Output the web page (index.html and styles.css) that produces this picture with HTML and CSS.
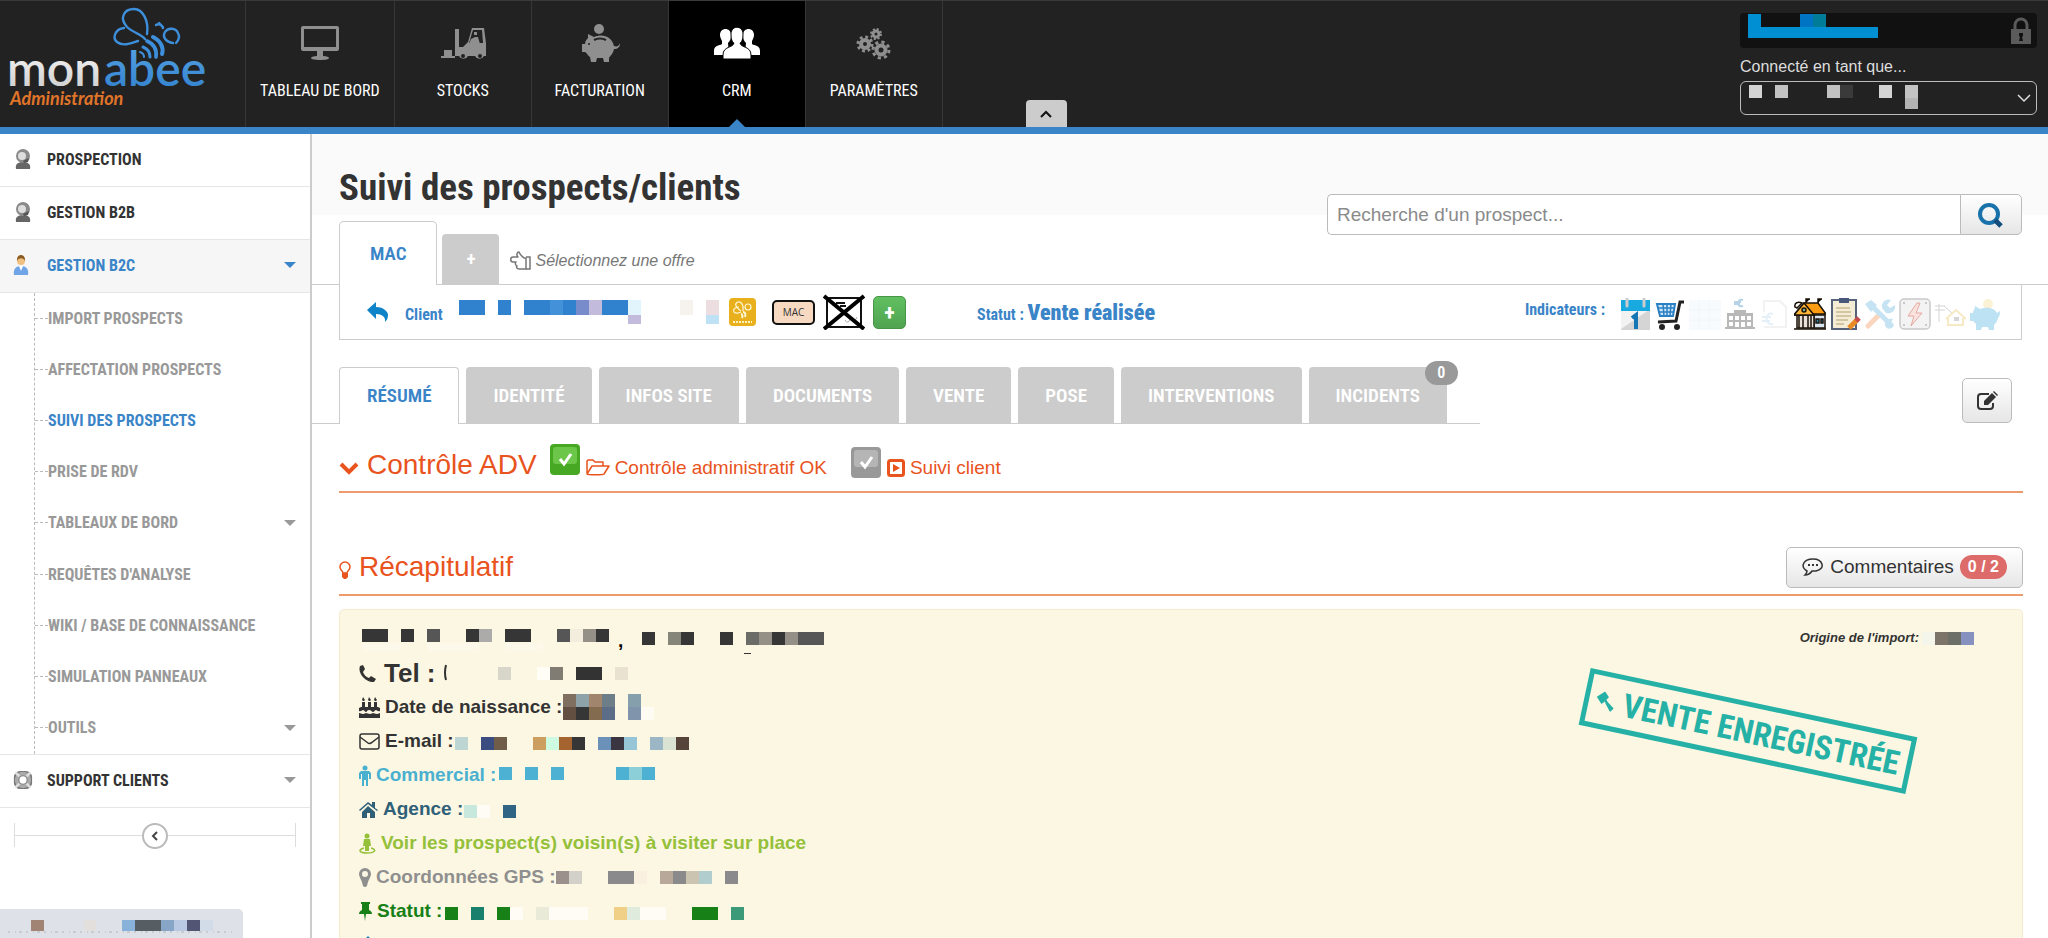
FILE: index.html
```html
<!DOCTYPE html>
<html lang="fr">
<head>
<meta charset="utf-8">
<title>Monabee - Suivi des prospects/clients</title>
<link rel="stylesheet" href="styles.css">
</head>
<body>
<header class="topbar">
  <a class="logo" href="#" aria-label="Monabee Administration">
    <svg width="230" height="110" viewBox="0 0 230 110">
      <defs>
        <linearGradient id="silver" x1="0" y1="0" x2="0" y2="1"><stop offset="0" stop-color="#fff"/><stop offset="1" stop-color="#c9c9c9"/></linearGradient>
        <linearGradient id="azure" x1="0" y1="0" x2="0" y2="1"><stop offset="0" stop-color="#5aa6e6"/><stop offset="1" stop-color="#2f7fcb"/></linearGradient>
      </defs>
      <text x="7" y="85" class="logo-word" fill="url(#silver)">mon</text>
      <text x="104" y="85" class="logo-word" fill="url(#azure)">abee</text>
      <text x="10" y="104" class="logo-sub">Administration</text>
      <g fill="none" stroke="#3d8fdb" stroke-linecap="round">
        <path stroke-width="2.4" d="M147 33C149 20 143 8 134 8C124 8 119 17 127 26C132 31 141 33 145 38"/>
        <path stroke-width="2.4" d="M124 27C115 28 112 37 117 41C123 46 132 42 138 40"/>
        <path stroke-width="2.4" d="M173 42C166 41 162 36 165 31C168 26 176 27 178 32C180 36 178 40 176 42"/>
        <path stroke-width="2.4" d="M156 24C159 22 162 24 163 27M159 22l4 4"/>
        <path stroke-width="4" d="M153 36C161 40 164 47 162 53"/>
        <path stroke-width="3.6" d="M147 40C154 43 157 49 156 56"/>
        <path stroke-width="3" d="M143 46C148 48 150 51 150 56"/>
        <path stroke-width="2" d="M140 51C143 52 144 54 144 56"/>
      </g>
    </svg>
  </a>
  <nav class="modules">
    <a href="#"><svg width="44" height="44" viewBox="0 0 44 44"><path fill="#8f8f8f" fill-rule="evenodd" d="M5 5h34a2 2 0 0 1 2 2v21a2 2 0 0 1-2 2H25v5c4 0 6 1 6 2s-3 2-9 2-9-1-9-2 2-2 6-2v-5H5a2 2 0 0 1-2-2V7a2 2 0 0 1 2-2zm1 3v18h32V8z"/></svg>TABLEAU DE BORD</a>
    <a href="#"><svg width="48" height="44" viewBox="0 0 48 44"><path fill="#8f8f8f" d="M16 8h4v18h4l5-5 4-14h12l2 15v13h-2a5 5 0 0 1-9 0h-7a5 5 0 0 1-9 0h-4zM2 35h14v2H2zM5 29h8v6H5z"/><path fill="#222" d="M34 9h9l1 13H30z"/><path fill="#8f8f8f" d="M35 11h3v3h-3zM32 18l4-2h3l2 7H30z"/><circle cx="24" cy="35" r="2" fill="#222"/><circle cx="41" cy="35" r="2" fill="#222"/></svg>STOCKS</a>
    <a href="#"><svg width="44" height="44" viewBox="0 0 44 44"><circle cx="21" cy="8" r="5" fill="#8f8f8f"/><path fill="#8f8f8f" d="M10 13l6 3c9-4 18 0 20 9 3 1 5 0 6-3 0 4-2 6-6 6-1 5-4 7-5 9v4h-5l-1-4h-6l-1 4h-5l-1-5c-2-1-3-4-5-5H4v-8h3c0-3 2-5 3-6z"/><path d="M16 19q6-3 12 0" stroke="#222" stroke-width="2" fill="none"/><circle cx="11" cy="23" r="1" fill="#222"/></svg>FACTURATION</a>
    <a href="#" class="current"><svg width="50" height="44" viewBox="0 0 50 44"><g fill="#fff"><path d="M8 14c0-8 11-8 11 0 0 4-1 6-3 8l1 12H2v-4c0-6 5-5 8-7v-3c-1-2-2-4-2-6z"/><path d="M42 14c0-8-11-8-11 0 0 4 1 6 3 8l-1 12h15v-4c0-6-5-5-8-7v-3c1-2 2-4 2-6z"/><path stroke="#000" stroke-width="1" d="M19 13c0-9 12-9 12 0 0 5-1 8-3 9 1 5 11 3 11 12v4H11v-4c0-9 10-7 11-12-2-1-3-4-3-9z"/></g></svg>CRM</a>
    <a href="#"><svg width="44" height="44" viewBox="0 0 44 44"><g fill="none" stroke="#8f8f8f"><circle cx="13" cy="23" r="4" stroke-width="4"/><circle cx="13" cy="23" r="7" stroke-width="3" stroke-dasharray="2.8 2.7"/><circle cx="29" cy="29" r="4.500" stroke-width="4"/><circle cx="29" cy="29" r="8" stroke-width="3" stroke-dasharray="3.2 3.100"/><circle cx="24" cy="13" r="3" stroke-width="3"/><circle cx="24" cy="13" r="5" stroke-width="2" stroke-dasharray="2 1.950"/></g></svg>PARAMÈTRES</a>
  </nav>
  <button class="fold" aria-label="Replier"><svg width="12" height="8" viewBox="0 0 12 8"><path d="M1 7l5-5 5 5" fill="none" stroke="#111" stroke-width="2"/></svg></button>
  <div class="session">
    <div class="session-user">
      <svg width="132" height="26" viewBox="0 0 132 26"><path fill="#008fd3" d="M0 0h13v13h117v11H0z"/><path fill="#0074c4" d="M52 0h13v13H52z"/><path fill="#007b98" d="M65 0h13v13H65z"/></svg>
      <svg width="22" height="28" viewBox="0 0 22 28"><path fill="#5b5b5b" d="M1 12h20v15H1z"/><path fill="none" stroke="#5b5b5b" stroke-width="3" d="M5 12V8a6 6 0 0 1 12 0v4"/><path fill="#111" d="M9 16h4v3l-1 1 1 4H9l1-4-1-1z"/></svg>
    </div>
    <label for="as">Connecté en tant que...</label>
    <div class="session-select">
      <select id="as"><option></option></select>
      <svg class="session-value" width="170" height="24" viewBox="0 0 170 24"><path fill="#d4d4d4" d="M0 0h13v13H0zM130 0h13v13h-13z"/><path fill="#c2c2c2" d="M26 0h13v13H26zM78 0h13v13H78zM156 0h13v13h-13z"/><path fill="#3a3a3a" d="M91 0h13v13H91z"/><path fill="#b4b4b4" d="M156 13h13v11h-13z"/></svg>
      <svg class="session-arrow" width="14" height="9" viewBox="0 0 14 9"><path d="M1 1l6 6 6-6" fill="none" stroke="#ddd" stroke-width="1.500"/></svg>
    </div>
  </div>
</header>
<div class="shell">
  <aside class="sidebar">
    <ul class="menu">
      <li><a href="#"><svg width="20" height="20" viewBox="0 0 20 20"><path fill="#666" d="M3 20c-1-5 2-7 7-7s8 2 7 7z"/><circle cx="10" cy="7" r="7" fill="#8a8a8a"/><circle cx="9" cy="7" r="4" fill="#ddd"/><path fill="#555" d="M10 12l6-3-1 4-4 1z"/></svg>PROSPECTION</a></li>
      <li><a href="#"><svg width="20" height="20" viewBox="0 0 20 20"><path fill="#666" d="M3 20c-1-5 2-7 7-7s8 2 7 7z"/><circle cx="10" cy="7" r="7" fill="#8a8a8a"/><circle cx="9" cy="7" r="4" fill="#ddd"/><path fill="#555" d="M10 12l6-3-1 4-4 1z"/></svg>GESTION B2B</a></li>
      <li class="open"><a href="#"><svg width="20" height="20" viewBox="0 0 20 20"><path fill="#6fa5e6" d="M1 20c-1-6 2-9 7-9s8 3 7 9z"/><path fill="#fff" d="M6 11h4l-2 5z"/><circle cx="8" cy="6" r="4" fill="#f0c080"/><path fill="#8a5a20" d="M4 6c-1-8 9-8 8 0-1-3-6-4-8 0z"/></svg>GESTION B2C<i class="caret"></i></a>
        <ul class="submenu">
          <li><a href="#">IMPORT PROSPECTS</a></li>
          <li><a href="#">AFFECTATION PROSPECTS</a></li>
          <li class="active"><a href="#">SUIVI DES PROSPECTS</a></li>
          <li><a href="#">PRISE DE RDV</a></li>
          <li><a href="#">TABLEAUX DE BORD<i class="caret"></i></a></li>
          <li><a href="#">REQUÊTES D'ANALYSE</a></li>
          <li><a href="#">WIKI / BASE DE CONNAISSANCE</a></li>
          <li><a href="#">SIMULATION PANNEAUX</a></li>
          <li><a href="#">OUTILS<i class="caret"></i></a></li>
        </ul>
      </li>
      <li class="support"><a href="#"><svg width="22" height="22" viewBox="0 0 22 22"><rect x="1" y="1" width="20" height="20" rx="7" fill="#777"/><circle cx="11" cy="11" r="7" fill="none" stroke="#aaa" stroke-width="4"/><path stroke="#ddd" stroke-width="3" d="M3 3l4 4M19 3l-4 4M3 19l4-4M19 19l-4-4"/><circle cx="11" cy="11" r="4" fill="#fff"/></svg>SUPPORT CLIENTS<i class="caret"></i></a></li>
    </ul>
    <div class="collapse"><button aria-label="Réduire le menu"><svg width="8" height="10" viewBox="0 0 8 10"><path d="M6 1L2 5l4 4" fill="none" stroke="#444" stroke-width="2"/></svg></button></div>
  </aside>
  <main class="content">
    <div class="page-head">
      <h1>Suivi des prospects/clients</h1>
      <form class="search">
        <input type="text" placeholder="Recherche d'un prospect..." aria-label="Recherche d'un prospect">
        <button type="button" aria-label="Rechercher"><svg width="28" height="28" viewBox="0 0 28 28"><circle cx="12" cy="13" r="9" fill="none" stroke="#1a72ab" stroke-width="4"/><path d="M18 19l6 6" stroke="#124f7c" stroke-width="5"/></svg></button>
      </form>
    </div>
    <div class="offers">
      <a class="offer" href="#">MAC</a>
      <a class="offer-add" href="#">+</a>
      <span class="hint"><svg width="21" height="20" viewBox="0 0 21 20"><path fill="none" stroke="#777" stroke-width="1.500" stroke-linejoin="round" d="M16 18H9c-2 0-3-2-2-3-2-1-2-3-1-4H3C0 11 0 6 3 6h5c-2-2-1-5 1-5 1 3 3 4 5 6h2z"/><path fill="none" stroke="#777" stroke-width="1.500" d="M16 6h4v12h-4"/></svg>Sélectionnez une offre</span>
    </div>
    <section class="client">
      <div class="client-id">
        <svg width="22" height="20" viewBox="0 0 22 20"><path fill="#0e83c8" d="M0 8l9-8v5c8 0 12 5 12 8 0 4-2 6-3 7 1-5-3-8-9-8v5z"/></svg>
        <a href="#">Client</a>
        <svg class="client-name" width="260" height="24" viewBox="0 0 260 24"><path fill="#3182ce" d="M0 0h26v15H0zM39 0h13v15H39zM65 0h26v15H65zM104 0h13v15h-13zM143 0h26v15h-26z"/><path fill="#4291d9" d="M91 0h13v15H91z"/><path fill="#788bcb" d="M117 0h13v15h-13z"/><path fill="#c3bbdb" d="M130 0h13v15h-13zM169 15h13v9h-13z"/><path fill="#e2f5fd" d="M169 0h13v15h-13z"/><path fill="#f6f2ee" d="M221 0h13v15h-13z"/><path fill="#ebdde0" d="M247 0h13v15h-13z"/><path fill="#bfe1f6" d="M247 15h13v9h-13z"/></svg>
        <svg class="bee" width="27" height="28" viewBox="0 0 27 28"><rect width="27" height="28" rx="4" fill="#e9b01e"/><g fill="none" stroke="#fff8d8" stroke-width="1.200"><path d="M14 13c1-6-2-10-5-9s-4 4 3 9M10 9c-5 0-6 3-5 5s5 1 7 0"/><circle cx="19" cy="9" r="3"/><path stroke-width="2" d="M13 20c1-2 0-4-1-4M16 19c1-3 0-5-2-5"/></g><path stroke="#fff3c0" stroke-width="2" stroke-dasharray="2 1" d="M4 24h19"/></svg>
        <span class="mac">MAC</span>
        <svg class="crossed" width="42" height="36" viewBox="0 0 42 36"><rect x="4" y="4" width="34" height="29" rx="3" fill="#fff" stroke="#111" stroke-width="2"/><path stroke="#111" stroke-width="2" d="M13 9h9M17 12h6"/><path fill="none" stroke="#aaa" d="M22 26q3 5 5-1 5 4 7-2"/><path stroke="#000" stroke-width="4" d="M1 2l40 33M41 2L1 35"/></svg>
        <button class="add" aria-label="Ajouter">+</button>
      </div>
      <p class="status">Statut : <strong>Vente réalisée</strong></p>
      <div class="indicators">
        <span>Indicateurs :</span>
        <svg width="32" height="32" viewBox="0 0 32 32"><path fill="#d5d5d5" d="M2 12h29v20H2z"/><path fill="#f2f2f2" d="M2 12h28L2 31z"/><path fill="#18a9e0" d="M2 2h29v11H2z"/><path stroke="#ccc" stroke-width="3" stroke-linecap="round" d="M8 1v7M25 1v7"/><path fill="none" stroke="#1576b5" stroke-width="4" d="M13 20l4-3v14"/></svg>
        <svg width="32" height="32" viewBox="0 0 32 32"><path fill="#cfe5f5" stroke="#2a80c4" stroke-width="2" d="M3 6h18l-2 12H6z"/><path stroke="#2a80c4" stroke-width="1.500" d="M4 10h16M5 14h15M9 6l1 12M13 6v12M17 6l-1 12"/><path fill="none" stroke="#222" stroke-width="3" d="M30 4h-4l-4 19-18 1"/><circle cx="8" cy="29" r="3" fill="#222"/><circle cx="23" cy="29" r="3" fill="#222"/></svg>
        <svg width="32" height="32" viewBox="0 0 32 32"><path fill="#f7fbfd" d="M0 2h32v30H0z"/><path stroke="#eef6fb" stroke-width="1" d="M0 12h32M0 22h32M10 2v30M20 2v30"/></svg>
        <svg width="32" height="32" viewBox="0 0 32 32"><path fill="none" stroke="#b7d3e7" stroke-width="2" d="M19 2c-6-2-7 8 0 6M10 4h7M10 6h6"/><path fill="#b8b8b8" d="M10 12h12v3h7v14h2v2H1v-2h2V15h7z"/><path fill="#fff" d="M5 18h4v4H5zM11 18h4v4h-4zM17 18h4v4h-4zM23 18h4v4h-4zM5 24h4v4H5zM11 24h4v5h-4zM17 24h4v5h-4zM23 24h4v4h-4z"/></svg>
        <svg width="32" height="32" viewBox="0 0 32 32"><path fill="none" stroke="#f2f2f2" stroke-width="2" d="M5 14V3h16l6 6v20H5"/><path fill="none" stroke="#e4f0f7" stroke-width="2" d="M14 16c-8-3-9 12 0 10M3 19h9M3 23h8"/></svg>
        <svg width="32" height="32" viewBox="0 0 32 32"><g stroke="#1a1208" stroke-width="1.500"><path fill="#d8e6f2" d="M20 17h11v13H20z"/><path fill="#e8e0da" d="M3 17h17v13H3z"/><path fill="#ff9c12" d="M0 17l10-12h14l8 11H20z"/><path fill="#ffb637" d="M0 17L10 5l10 12z"/><path d="M0 31h32M12 5V1h4M24 5V1h4M5 18v12M9 18v12M14 18v12M17 18v12"/><path fill="#2f86b4" d="M22 21h3v4h-3zM27 21h2v4h-2z"/><circle cx="10" cy="12" r="2" fill="#6fb49b"/><path fill="#fff" d="M1 9c-1-4 3-6 7-4l-5 5z"/></g></svg>
        <svg width="32" height="32" viewBox="0 0 32 32"><path fill="#f5ecd6" stroke="#55627a" stroke-width="2" d="M3 2h24v29H3z"/><path fill="#49577a" d="M10 0h10v5H10z"/><path stroke="#c9b993" stroke-width="1.500" d="M7 10h14M7 14h15M7 18h15M7 22h12M7 26h8"/><path stroke="#e98a26" stroke-width="5" d="M20 30l8-8"/><path stroke="#c44b4b" stroke-width="5" d="M27 23l3-3"/></svg>
        <svg width="32" height="32" viewBox="0 0 32 32"><path stroke="#fbd6be" stroke-width="5" stroke-linecap="round" d="M4 28l11-11"/><path stroke="#c5e3f3" stroke-width="5" stroke-linecap="round" d="M7 7l20 20"/><path fill="#c5e3f3" d="M1 6l6-4 6 5-6 7zM18 10c-1-6 4-10 9-8l-4 5 3 3 5-3c1 7-5 9-9 8zM21 27c0-4 3-7 8-6l-3 5 4 1c-2 5-8 5-9 0z"/></svg>
        <svg width="32" height="32" viewBox="0 0 32 32"><rect x="1" y="1" width="30" height="30" rx="4" fill="#f3f3f3" stroke="#c9c9c9" stroke-width="1.500"/><path fill="#fbe3df" stroke="#e6a8a0" d="M18 5l-9 13h6l-3 10 11-13h-6l4-10z"/><g fill="#bbb"><circle cx="5" cy="5" r="1"/><circle cx="27" cy="5" r="1"/><circle cx="5" cy="27" r="1"/><circle cx="27" cy="27" r="1"/></g></svg>
        <svg width="32" height="32" viewBox="0 0 32 32"><path fill="none" stroke="#d4d4d4" d="M5 6v18M1 8h10M1 12h10M10 8l8 7"/><path fill="none" stroke="#f6e9c4" stroke-width="2" d="M12 21l10-9 10 9M14 20v7h15v-7"/><path fill="#d6d6d6" d="M20 19h5v4h-5z"/></svg>
        <svg width="32" height="32" viewBox="0 0 32 32"><circle cx="19" cy="6" r="5" fill="#fbf1d4"/><path fill="#bde2f3" d="M6 8l5 3c9-3 15 0 17 4l3-2c0 4-1 6-2 7-1 4-3 6-4 7v5h-5l-1-3h-6l-1 3H7v-6l-3-3H1v-8h3c0-3 2-3 2-7z"/></svg>
      </div>
    </section>
    <div class="tabs-row">
      <nav class="tabs">
        <a class="selected" href="#">RÉSUMÉ</a><a href="#">IDENTITÉ</a><a href="#">INFOS SITE</a><a href="#">DOCUMENTS</a><a href="#">VENTE</a><a href="#">POSE</a><a href="#">INTERVENTIONS</a><a href="#">INCIDENTS<span class="count">0</span></a>
      </nav>
      <button class="btn edit" aria-label="Modifier"><svg width="22" height="20" viewBox="0 0 22 20"><path fill="none" stroke="#333" stroke-width="2" d="M13 3H5a3 3 0 0 0-3 3v9a3 3 0 0 0 3 3h9a3 3 0 0 0 3-3v-3"/><path fill="#333" d="M8 14v-4l8-8 4 4-8 8zM17 1l1-1 4 4-1 1z"/></svg></button>
    </div>
    <section class="block control">
      <h2><svg width="20" height="14" viewBox="0 0 20 14"><path d="M2 3l8 8 8-8" fill="none" stroke="#e9531d" stroke-width="4"/></svg>Contrôle ADV</h2>
      <a class="check" href="#"><svg width="32" height="33" viewBox="0 0 32 33"><rect x="1" y="1" width="30" height="31" rx="4" fill="#47a823"/><rect x="4" y="4" width="24" height="17" rx="3" fill="#6cc64a"/><path d="M11 16l4 5 7-10" fill="none" stroke="#fff" stroke-width="3"/></svg><svg width="24" height="17" viewBox="0 0 24 17"><path fill="none" stroke="#e9531d" stroke-width="1.500" stroke-linejoin="round" d="M1 14V2l1-1h5l2 2h8v4M1 15L6 7h17l-5 8c-1 1-16 1-17 0z"/></svg>Contrôle administratif OK</a>
      <a class="check pending" href="#"><svg width="32" height="33" viewBox="0 0 32 33"><rect x="1" y="1" width="30" height="31" rx="4" fill="#999"/><rect x="4" y="4" width="24" height="17" rx="3" fill="#b5b5b5"/><path d="M11 16l4 5 7-10" fill="none" stroke="#fff" stroke-width="3"/></svg><svg width="18" height="18" viewBox="0 0 18 18"><rect x="1.500" y="1.500" width="15" height="15" rx="2" fill="none" stroke="#e9531d" stroke-width="3"/><path fill="#e9531d" d="M6 5l7 4-7 4z"/></svg>Suivi client</a>
    </section>
    <section class="block recap">
      <h2><svg width="12" height="18" viewBox="0 0 12 18"><path fill="none" stroke="#e9531d" stroke-width="1.500" d="M4 12c0-2-3-3-3-6a5 5 0 0 1 10 0c0 3-3 4-3 6z"/><path fill="#e9531d" d="M3 12h6v4l-2 2H5l-2-2z"/></svg>Récapitulatif</h2>
      <button class="btn comments"><svg width="22" height="18" viewBox="0 0 22 18"><path fill="none" stroke="#333" stroke-width="1.500" d="M5 13C-2 9 1 1 11 1s13 10 3 12c-2 0-3 0-4 0-2 3-5 4-7 4 2-2 2-3 2-4z"/><path fill="#333" d="M6 6h2v2H6zM10 6h2v2h-2zM14 6h2v2h-2z"/></svg>Commentaires<span class="ratio">0 / 2</span></button>
    </section>
    <section class="card">
      <ul class="facts">
        <li class="who"><svg width="470" height="28" viewBox="0 0 470 28"><path fill="#363636" d="M3 2h26v13H3zM42 2h13v13H42zM107 2h13v13h-13zM146 2h26v13h-26zM237 2h13v13h-13zM283 5h13v13h-13zM322 5h13v13h-13zM361 5h13v13h-13zM413 5h13v13h-13z"/><path fill="#565656" d="M68 2h13v13H68zM198 2h13v13h-13zM439 5h26v13h-26z"/><path fill="#adabaa" d="M120 2h13v13h-13z"/><path fill="#949088" d="M224 2h13v13h-13zM400 5h13v13h-13zM426 5h13v13h-13z"/><path fill="#6b6b68" d="M387 5h13v13h-13z"/><path fill="#858679" d="M309 5h13v13h-13z"/><path fill="#f2eddc" d="M211 2h13v13h-13z"/><path fill="#fdf9ea" d="M3 16h38v8H3zM68 16h52v8H68zM146 16h38v8h-38z"/><text x="259" y="20">,</text><path fill="#333" d="M385 26h7v1h-7z"/></svg></li>
        <li class="tel"><svg width="17" height="17" viewBox="0 0 17 17"><path fill="#333" d="M1 1l3-1 2 4-2 3c1 3 3 5 6 6l2-2 5 3-2 3C8 18-2 9 1 1z"/></svg>Tel :<svg class="after-tel" width="184" height="18" viewBox="0 0 184 18"><path fill="none" stroke="#333" stroke-width="2" d="M2 1q-2 8 0 15"/><path fill="#d8d6ca" d="M54 3h13v13H54z"/><path fill="#807c73" d="M106 3h13v13h-13z"/><path fill="#fffdf6" d="M93 3h13v13H93z"/><path fill="#333" d="M132 3h26v13h-26z"/><path fill="#e9e2d1" d="M171 3h13v13h-13z"/></svg></li>
        <li><svg width="21" height="21" viewBox="0 0 21 21"><path fill="#333" d="M0 21v-5c2 0 2 1 4 1s2-1 3-1 2 1 4 1 2-1 3-1 2 1 4 1 2-1 3-1v5zM0 14v-3l2-1h1V5h3v5h3V5h3v5h3V5h3v5h1l2 1v3c-2 1-3-1-4-1s-2 2-3 2-2-2-4-2-2 2-3 2-2-2-3-2-2 2-4 1zM4 0l2 3-1 1H4L3 3zM10 0l2 3-1 1h-1L9 3zM16 0l2 3-1 1h-1l-1-1z"/></svg>Date de naissance :<svg class="value" width="92" height="26" viewBox="0 0 92 26"><path fill="#7f6f60" d="M0 0h13v13H0z"/><path fill="#8ea2aa" d="M13 0h13v13H13z"/><path fill="#a1866d" d="M26 0h13v13H26z"/><path fill="#6d7e88" d="M39 0h13v13H39z"/><path fill="#634f41" d="M0 13h13v13H0z"/><path fill="#363636" d="M13 13h13v13H13z"/><path fill="#836b4f" d="M26 13h13v13H26z"/><path fill="#5c6d87" d="M39 13h13v13H39z"/><path fill="#859fad" d="M65 0h13v13H65z"/><path fill="#8095ab" d="M65 13h13v13H65z"/><path fill="#fdfbf2" d="M78 13h13v13H78z"/></svg></li>
        <li><svg width="21" height="17" viewBox="0 0 21 17"><rect x="1" y="1" width="19" height="15" rx="2" fill="none" stroke="#333" stroke-width="1.500"/><path fill="none" stroke="#333" stroke-width="1.500" d="M1 4l8 6q1 1 3 0l8-6"/></svg>E-mail :<svg class="value low" width="236" height="13" viewBox="0 0 236 13"><path fill="#bdd6d4" d="M0 0h13v13H0z"/><path fill="#3b4d80" d="M26 0h13v13H26z"/><path fill="#6f5c49" d="M39 0h13v13H39z"/><path fill="#cc9f61" d="M78 0h13v13H78z"/><path fill="#cdfae0" d="M91 0h13v13H91z"/><path fill="#a5632f" d="M104 0h13v13h-13z"/><path fill="#363636" d="M117 0h13v13h-13z"/><path fill="#6c91b9" d="M143 0h13v13h-13z"/><path fill="#3b3541" d="M156 0h13v13h-13z"/><path fill="#96c5d8" d="M169 0h13v13h-13z"/><path fill="#9bb7c5" d="M195 0h13v13h-13z"/><path fill="#d9e2d3" d="M208 0h13v13h-13z"/><path fill="#56443a" d="M221 0h13v13h-13z"/></svg></li>
        <li class="sky"><svg width="12" height="21" viewBox="0 0 12 21"><circle cx="6" cy="3" r="2.500"/><path d="M2 6h8l2 2v6h-2V9H9v12H7v-6H5v6H3V9H2v5H0V8z"/></svg>Commercial :<svg class="value high" width="158" height="13" viewBox="0 0 158 13"><path fill="#4db1d3" d="M0 0h13v13H0zM26 0h13v13H26zM52 0h13v13H52zM117 0h13v13h-13zM143 0h13v13h-13z"/><path fill="#8dcfd9" d="M130 0h13v13h-13z"/></svg></li>
        <li class="navy"><svg width="19" height="17" viewBox="0 0 19 17"><path d="M9 1l4 3V1h3v6l3 2-1 1-9-7-8 7-1-1zM9 5l7 6v6h-5v-5H8v5H3v-6z"/></svg>Agence :<svg class="value low" width="54" height="13" viewBox="0 0 54 13"><path fill="#c9e8dd" d="M0 0h13v13H0z"/><path fill="#fefcf5" d="M13 0h13v13H13z"/><path fill="#2f6484" d="M39 0h13v13H39z"/></svg></li>
        <li class="lime"><svg width="17" height="21" viewBox="0 0 17 21"><circle cx="8" cy="3" r="2.500"/><path d="M5 6h6l1 7h-2v5H6v-5H4z"/><path fill="none" stroke="#95c03a" stroke-width="1.500" d="M5 15c-7 2-4 5 3 5s11-3 4-5"/></svg><a href="#">Voir les prospect(s) voisin(s) à visiter sur place</a></li>
        <li class="grey"><svg width="12" height="19" viewBox="0 0 12 19"><path fill-rule="evenodd" d="M6 0a6 6 0 0 1 6 6c0 3-3 6-4 12q-2 2-4 0C3 12 0 9 0 6a6 6 0 0 1 6-6zm0 3a3 3 0 1 0 0 6 3 3 0 0 0 0-6z"/></svg>Coordonnées GPS :<svg class="value" width="184" height="13" viewBox="0 0 184 13"><path fill="#9b908b" d="M0 0h13v13H0z"/><path fill="#d3cfc9" d="M13 0h13v13H13z"/><path fill="#8a8a8d" d="M52 0h26v13H52zM117 0h13v13h-13zM169 0h13v13h-13z"/><path fill="#faf0df" d="M78 0h13v13H78z"/><path fill="#b7a899" d="M104 0h13v13h-13z"/><path fill="#cbc4b1" d="M130 0h13v13h-13z"/><path fill="#b1cdcd" d="M143 0h13v13h-13z"/></svg></li>
        <li class="green"><svg width="13" height="19" viewBox="0 0 13 19"><path d="M2 0h9v2h-1v6c2 1 3 2 3 4H7l-1 7-1-7H0c0-2 1-3 3-4V2H2z"/></svg>Statut :<svg class="value wide low" width="300" height="13" viewBox="0 0 300 13"><path fill="#178017" d="M0 0h13v13H0zM52 0h13v13H52zM247 0h26v13h-26z"/><path fill="#18806d" d="M26 0h13v13H26z"/><path fill="#fefcf4" d="M65 0h13v13H65zM104 0h39v13h-39zM195 0h26v13h-26z"/><path fill="#e9ead8" d="M91 0h13v13H91z"/><path fill="#f0cf86" d="M169 0h13v13h-13z"/><path fill="#dfecdd" d="M182 0h13v13h-13z"/><path fill="#3c9a79" d="M286 0h13v13h-13z"/></svg></li>
        <li class="blue"><svg width="18" height="19" viewBox="0 0 18 19"><path d="M9 0l9 9-9 10L0 9z"/></svg>Montant de la vente : 17900 HT €</li>
      </ul>
      <div class="origin">Origine de l'import:<svg width="52" height="13" viewBox="0 0 52 13"><path fill="#f4f6ec" d="M0 0h13v13H0z"/><path fill="#7c7468" d="M13 0h13v13H13z"/><path fill="#6b6f68" d="M26 0h13v13H26z"/><path fill="#8791c0" d="M39 0h13v13H39z"/></svg></div>
      <div class="stamp"><svg width="19" height="19" viewBox="0 0 19 19"><path d="M0 7l7-7 5 5-2 3 2 2 7 5-3 4-6-7-1-2-3 3z"/></svg>VENTE ENREGISTRÉE</div>
    </section>
  </main>
</div>
<div class="linkbar"><svg width="240" height="14" viewBox="0 0 240 14"><path stroke="#b4b6be" stroke-dasharray="2 5 1 3 3 4" d="M8 12h226"/><path fill="#a18474" d="M31 0h13v11H31z"/><path fill="#e2dfdd" d="M84 0h12v11H84z"/><path fill="#88b2d9" d="M122 0h13v11h-13z"/><path fill="#565e63" d="M135 0h26v11h-26z"/><path fill="#87a5c6" d="M161 0h13v11h-13z"/><path fill="#b9c9e4" d="M174 0h13v11h-13z"/><path fill="#525573" d="M187 0h13v11h-13z"/><path fill="#d2dce8" d="M200 0h13v11h-13z"/></svg></div>
</body>
</html>
```
FILE: styles.css
```css
* { box-sizing: border-box; }
html, body { height: 100%; }
body {
  margin: 0;
  display: flex;
  flex-direction: column;
  overflow: hidden;
  background: #fff;
  color: #333;
  font: 19px "Liberation Sans", Arial, sans-serif;
}
a { color: inherit; text-decoration: none; }
ul { list-style: none; margin: 0; padding: 0; }
h1, h2, p { margin: 0; }
button, input, select { font: inherit; color: inherit; }
svg { display: block; flex: none; }
.topbar, .sidebar, h1, .offer, .offer-add, .client, .tabs, .stamp {
  font-family: "Roboto Condensed", "Liberation Sans Narrow", Roboto, sans-serif;
}

/* top bar */
.topbar {
  display: flex;
  flex: none;
  height: 134px;
  background: #222;
  border-top: 1px solid #3a3a3a;
  border-bottom: 7px solid #3a84c8;
}
.logo { width: 245px; }
.logo-word { font: 600 48px "Lato", sans-serif; }
.logo-sub { font: italic 700 18px "Lato", sans-serif; fill: #e0752a; }
.modules { display: flex; border-left: 1px solid #363636; }
.modules a {
  position: relative;
  display: flex;
  flex-direction: column;
  align-items: center;
  min-width: 137px;
  padding: 20px 14px 0;
  gap: 14px;
  border-right: 1px solid #363636;
  color: #fff;
  font-size: 16px;
  line-height: 24px;
}
.modules .current { background: #000; }
.modules .current::after {
  content: "";
  position: absolute;
  bottom: 0;
  left: 50%;
  margin-left: -8px;
  border: 8px solid transparent;
  border-top: 0;
  border-bottom-color: #3a84c8;
}
.fold {
  align-self: flex-end;
  display: grid;
  place-items: center;
  width: 41px;
  height: 27px;
  margin-left: 83px;
  padding: 0;
  border: 0;
  border-radius: 4px 4px 0 0;
  background: #ccc;
}
.session {
  width: 297px;
  margin: 12px 11px 0 auto;
  font: 16px/20px "Liberation Sans", Arial, sans-serif;
  color: #ddd;
}
.session-user {
  display: flex;
  justify-content: space-between;
  height: 35px;
  padding: 1px 5px 0 8px;
  border-radius: 4px;
  background: #111;
}
.session-user svg:last-child { margin-top: 3px; }
.session label { display: block; margin: 9px 0 4px; }
.session-select { position: relative; }
.session-select select {
  width: 100%;
  height: 34px;
  appearance: none;
  border: 1px solid #bbb;
  border-radius: 6px;
  background: #222;
  color: #ddd;
}
.session-value { position: absolute; top: 4px; left: 9px; }
.session-arrow { position: absolute; top: 13px; right: 6px; pointer-events: none; }

/* side menu */
.shell { display: flex; flex: 1; min-height: 0; }
.sidebar {
  flex: 0 0 312px;
  border-right: 2px solid #ccc;
  font-size: 16px;
  font-weight: 700;
}
.menu > li > a {
  display: flex;
  align-items: center;
  height: 53px;
  padding: 0 14px 2px 13px;
  border-bottom: 1px solid #e6e6e6;
}
.menu > li > a svg { width: 20px; margin-right: 14px; }
.menu > .open > a { background: #f6f6f6; color: #3a84c8; }
.caret {
  margin-left: auto;
  border: 6px solid transparent;
  border-bottom: 0;
  border-top: 6px solid #999;
}
.open > a > .caret { border-top-color: #3a84c8; }
.submenu {
  display: grid;
  grid-auto-rows: 1fr;
  min-height: 461px;
  margin-left: 34px;
  border-left: 1px dashed #bbb;
  color: #999;
}
.submenu a { display: flex; align-items: center; height: 100%; padding: 0 14px 1px 0; }
.submenu a::before { content: ""; width: 13px; border-top: 1px dashed #bbb; }
.submenu .active { color: #3a84c8; }
.support { border-top: 1px solid #e6e6e6; }
.collapse {
  display: grid;
  place-items: center;
  height: 24px;
  margin: 15px 14px;
  border: solid #ddd;
  border-width: 0 1px;
  background: linear-gradient(#ddd, #ddd) center / 100% 1px no-repeat;
}
.collapse button {
  display: grid;
  place-items: center;
  width: 26px;
  height: 26px;
  padding: 0;
  border: 2px solid #bbb;
  border-radius: 50%;
  background: #fff;
}

/* page head */
.content { flex: 1; min-width: 0; }
.page-head {
  display: flex;
  align-items: flex-end;
  justify-content: space-between;
  height: 81px;
  padding: 0 26px 0 27px;
  background: #fafafa;
}
h1 { font-size: 37px; line-height: 54px; font-weight: 700; }
.search { display: flex; flex: 0 0 695px; height: 41px; margin-bottom: -20px; }
.search input {
  flex: 1;
  padding: 0 9px;
  border: 1px solid #bbb;
  border-right: 0;
  border-radius: 5px 0 0 5px;
  background: #fff;
}
.search input::placeholder { color: #8a8a8a; }
.search button {
  display: grid;
  place-items: center;
  width: 62px;
  padding: 0;
  border: 1px solid #bbb;
  border-radius: 0 5px 5px 0;
  background: linear-gradient(#fff, #e6e6e6);
}

/* offers */
.offers {
  display: flex;
  align-items: flex-end;
  height: 64px;
  margin-top: 6px;
  padding-left: 27px;
  border-bottom: 1px solid #ccc;
}
.offer {
  height: 64px;
  margin: 0 5px -1px 0;
  padding: 0 30px;
  border: 1px solid #ccc;
  border-bottom: 0;
  border-radius: 5px 5px 0 0;
  background: #fff;
  color: #3a84c8;
  font-size: 19px;
  font-weight: 600;
  line-height: 64px;
}
.offer-add {
  width: 57px;
  height: 50px;
  border-radius: 4px 4px 0 0;
  background: #ccc;
  color: #fff;
  font-size: 19px;
  font-weight: 600;
  line-height: 50px;
  text-align: center;
}
.hint {
  display: flex;
  gap: 4px;
  padding: 0 11px 13px;
  color: #777;
  font-size: 16px;
  font-style: italic;
  line-height: 20px;
}

/* client bar */
.client {
  display: flex;
  align-items: center;
  height: 55px;
  margin: 0 26px 0 27px;
  border: 1px solid #ccc;
  border-top: 0;
  color: #3a84c8;
  font-size: 16px;
  font-weight: 700;
}
.client-id { display: flex; flex: 0 0 637px; align-items: center; padding-left: 27px; }
.client-id > a { width: 38px; margin: 5px 16px 0; }
.bee { margin: 0 16px 0 10px; }
.mac {
  width: 43px;
  height: 25px;
  margin-right: 8px;
  border: 2px solid #111;
  border-radius: 5px;
  background: #f6d9c0;
  color: #333;
  font: 10px/21px "Open Sans", sans-serif;
  text-align: center;
}
.add {
  width: 33px;
  height: 33px;
  margin-left: 8px;
  padding: 0;
  border: 1px solid #469646;
  border-radius: 5px;
  background: linear-gradient(#60c060, #51a351);
  color: #fff;
  font-size: 22px;
}
.status strong { font-size: 22px; }
.indicators { display: flex; gap: 3px; margin-left: auto; padding-right: 20px; }
.indicators span { margin-right: 11px; line-height: 32px; }
.indicators svg { margin-top: 4px; }

/* record tabs */
.tabs-row { display: flex; align-items: flex-start; justify-content: space-between; padding: 27px 36px 0 0; }
.tabs { display: flex; gap: 7px; height: 57px; padding: 0 33px 0 27px; border-bottom: 1px solid #ccc; }
.tabs a {
  position: relative;
  height: 56px;
  padding: 0 27px;
  border-radius: 4px 4px 0 0;
  background: #ccc;
  color: #fff;
  font-size: 19px;
  font-weight: 600;
  line-height: 58px;
}
.tabs .selected {
  height: 57px;
  border: 1px solid #ccc;
  border-bottom: 0;
  background: #fff;
  color: #3a84c8;
  line-height: 56px;
}
.count {
  position: absolute;
  top: -6px;
  right: -11px;
  width: 33px;
  border-radius: 12px;
  background: #999;
  font-size: 16px;
  line-height: 24px;
  text-align: center;
}
.btn {
  display: flex;
  align-items: center;
  justify-content: center;
  border: 1px solid #bbb;
  border-radius: 5px;
  background: linear-gradient(#fff, #e6e6e6);
  color: #333;
}
.edit { width: 50px; height: 45px; margin-top: 11px; padding: 0; }

/* sections */
.block {
  display: flex;
  align-items: center;
  margin: 0 25px 0 27px;
  border-bottom: 2px solid #ef9a6c;
  color: #e9531d;
}
.block h2 { display: flex; align-items: center; gap: 8px; font-size: 28px; font-weight: 400; line-height: 32px; }
.block h2 svg { margin-top: 6px; }
.control { height: 69px; padding-top: 14px; }
.check { display: flex; align-items: center; gap: 5px; margin: 6px 12px 0; line-height: 22px; }
.check svg:first-child { align-self: flex-start; margin-top: -14px; }
.check + .check { margin-left: 11px; }
.pending svg:first-child { margin-top: -11px; }
.recap { justify-content: space-between; height: 57px; margin-top: 46px; padding-top: 1px; }
.comments { gap: 6px; height: 41px; padding: 0 15px; font-size: 19px; }
.ratio {
  padding: 0 8px;
  border-radius: 12px;
  background: #dd6b69;
  color: #fff;
  font-size: 16px;
  font-weight: 700;
  line-height: 24px;
}

/* summary card */
.card {
  position: relative;
  margin: 13px 25px 0 27px;
  padding: 16px 19px;
  border: 1px solid #f5ebcf;
  border-radius: 5px;
  background: #fcf7e3;
}
.facts { font-size: 19px; font-weight: 700; }
.facts li { display: flex; align-items: center; gap: 5px; height: 34px; }
.facts .who { height: 30px; }
.facts .tel { gap: 8px; font-size: 26px; }
.value { margin-left: -4px; }
.value.low { margin-top: 4px; }
.value.high { margin: 0 0 4px -2px; }
.value.wide { margin-left: -2px; }
.sky { color: #4ab0d0; fill: #4ab0d0; }
.navy { color: #2f6078; fill: #2f6078; }
.lime { color: #95c03a; fill: #95c03a; }
.grey { color: #8f8f8f; fill: #8f8f8f; }
.green { color: #178017; fill: #178017; }
.blue { color: #2583bd; fill: #2583bd; }
.origin {
  position: absolute;
  top: 20px;
  right: 48px;
  display: flex;
  align-items: flex-end;
  gap: 3px;
  font-size: 13px;
  font-style: italic;
  font-weight: 700;
}
.stamp {
  position: absolute;
  top: 92px;
  right: 107px;
  display: flex;
  align-items: center;
  justify-content: center;
  gap: 8px;
  width: 334px;
  height: 58px;
  border: 5px solid #26b1a6;
  color: #26b1a6;
  fill: #26b1a6;
  font-size: 33px;
  font-weight: 700;
  white-space: nowrap;
  transform: rotate(12deg);
}

/* link preview */
.linkbar {
  position: fixed;
  bottom: 0;
  left: 0;
  width: 243px;
  padding: 11px 0 4px;
  border-top-right-radius: 5px;
  background: #dfe1e9;
}
```
